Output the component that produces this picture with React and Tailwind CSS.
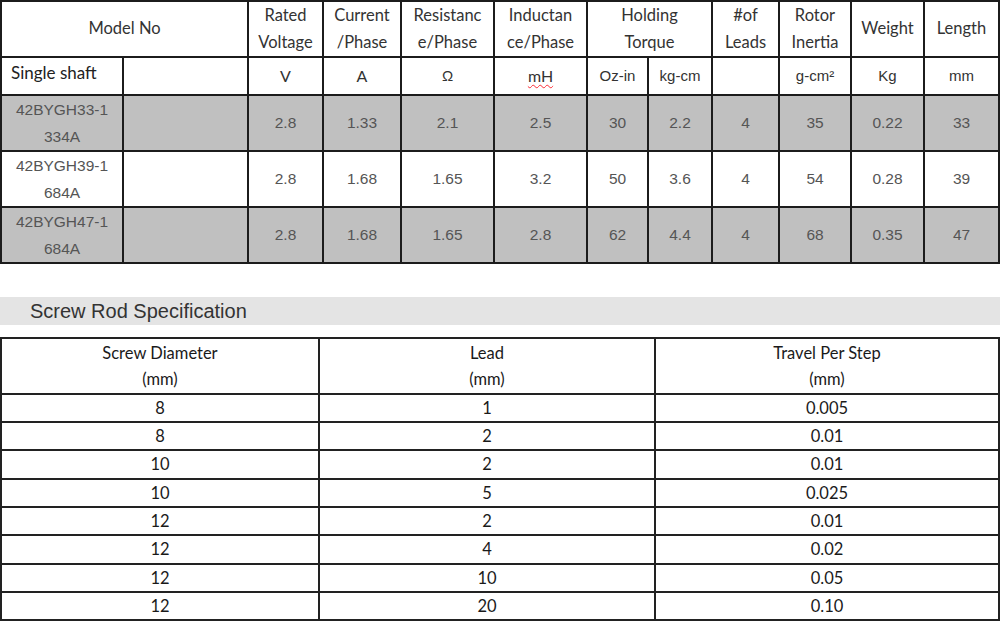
const motors = [
  { model: ["42BYGH33-1", "334A"], v: ["2.8", "1.33", "2.1", "2.5", "30", "2.2", "4", "35", "0.22", "33"], gray: true },
  { model: ["42BYGH39-1", "684A"], v: ["2.8", "1.68", "1.65", "3.2", "50", "3.6", "4", "54", "0.28", "39"], gray: false },
  { model: ["42BYGH47-1", "684A"], v: ["2.8", "1.68", "1.65", "2.8", "62", "4.4", "4", "68", "0.35", "47"], gray: true },
]

const screws = [
  ["8", "1", "0.005"],
  ["8", "2", "0.01"],
  ["10", "2", "0.01"],
  ["10", "5", "0.025"],
  ["12", "2", "0.01"],
  ["12", "4", "0.02"],
  ["12", "10", "0.05"],
  ["12", "20", "0.10"],
]

function Head({ children, span }) {
  return (
    <div
      className={`${span ? "col-span-2" : ""} bg-white flex items-center justify-center text-center font-['Lato',sans-serif] text-[16.5px] leading-[27px] text-[#333] pb-[1px]`}
    >
      <div>{children}</div>
    </div>
  )
}

function Unit({ children, lato }) {
  return (
    <div
      className={`${lato ? "font-['Lato',sans-serif] text-[16px]" : "font-['Liberation_Sans',Arial,sans-serif] text-[15px]"} bg-white flex items-center justify-center text-[#333]`}
    >
      {children}
    </div>
  )
}

export default function App() {
  return (
    <div className="w-[1000px] h-[632px] bg-white overflow-hidden">
      {/* motor spec table */}
      <div className="grid grid-cols-[120px_123px_73px_76px_91px_91px_59px_62px_65px_70px_71px_73px] grid-rows-[54px_36px_54px_54px_54px] gap-[2px] p-[2px] bg-[#1c1c1c] w-[1000px]">
        <Head span>Model No</Head>
        <Head>Rated<br />Voltage</Head>
        <Head>Current<br />/Phase</Head>
        <Head>Resistanc<br />e/Phase</Head>
        <Head>Inductan<br />ce/Phase</Head>
        <Head span>Holding<br />Torque</Head>
        <Head>#of<br />Leads</Head>
        <Head>Rotor<br />Inertia</Head>
        <Head>Weight</Head>
        <Head>Length</Head>

        <div className="bg-white flex items-center pl-[9px] pb-[6px] font-['Lato',sans-serif] text-[17px] text-[#222]">Single shaft</div>
        <div className="bg-white"></div>
        <Unit lato>V</Unit>
        <Unit lato>A</Unit>
        <Unit>Ω</Unit>
        <Unit lato>
          <span className="underline decoration-wavy decoration-red-500 decoration-1 underline-offset-2">mH</span>
        </Unit>
        <Unit>Oz-in</Unit>
        <Unit>kg-cm</Unit>
        <div className="bg-white"></div>
        <Unit>g-cm²</Unit>
        <Unit>Kg</Unit>
        <Unit>mm</Unit>

        {motors.map((m, i) => {
          const bg = m.gray ? "bg-[#c0c0c0]" : "bg-white"
          return [
            <div key={i + "m"} className={`${bg} flex items-center justify-center text-center font-['Liberation_Sans',Arial,sans-serif] text-[15.5px] leading-[27px] text-[#555]`}>
              <div>{m.model[0]}<br />{m.model[1]}</div>
            </div>,
            <div key={i + "e"} className={bg}></div>,
            ...m.v.map((val, j) => (
              <div key={i + "-" + j} className={`${bg} flex items-center justify-center font-['Liberation_Sans',Arial,sans-serif] text-[15.5px] text-[#555]`}>
                {val}
              </div>
            )),
          ]
        })}
      </div>

      {/* section bar */}
      <div className="mt-[33px] h-[28px] bg-[#e4e4e4] flex items-center pl-[30px]">
        <span className="font-['Liberation_Sans',Arial,sans-serif] text-[20px] text-[#333]">Screw Rod Specification</span>
      </div>

      {/* screw rod table */}
      <div className="mt-[12px] grid grid-cols-[316px_334px_342px] grid-rows-[54px_26px_26px_27px_26px_26px_27px_26px_26px] gap-[2px] p-[2px] bg-[#222] w-[1000px] font-['Lato',sans-serif] text-[16.5px] text-[#1a1a1a]">
        <div className="bg-white flex items-center justify-center text-center leading-[26px]">
          <div>Screw Diameter<br />(mm)</div>
        </div>
        <div className="bg-white flex items-center justify-center text-center leading-[26px]">
          <div>Lead<br />(mm)</div>
        </div>
        <div className="bg-white flex items-center justify-center text-center leading-[26px]">
          <div>Travel Per Step<br />(mm)</div>
        </div>
        {screws.map((r, i) =>
          r.map((c, j) => (
            <div key={i + "-" + j} className="bg-white flex items-center justify-center">
              {c}
            </div>
          ))
        )}
      </div>
    </div>
  )
}
